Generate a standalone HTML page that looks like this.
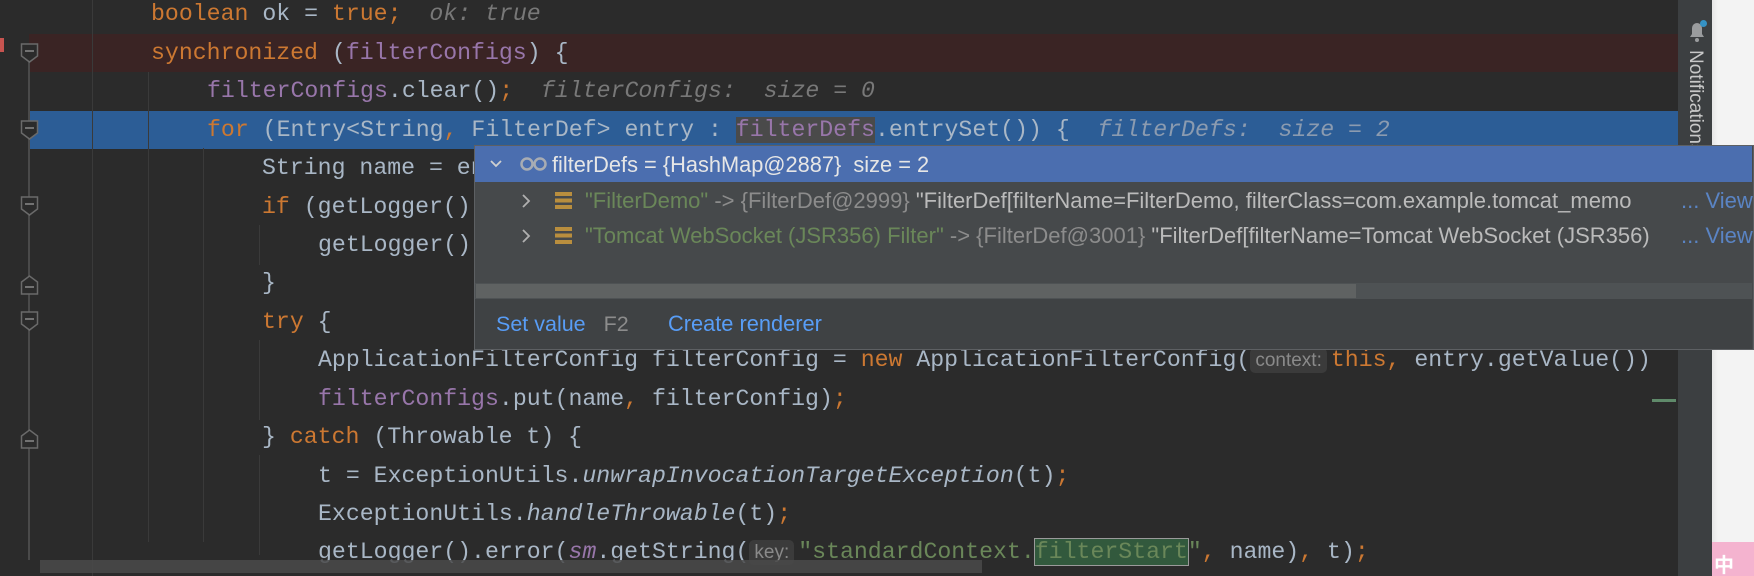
<!DOCTYPE html>
<html><head><meta charset="utf-8">
<style>
*{margin:0;padding:0;box-sizing:border-box}
body{width:1754px;height:576px;overflow:hidden;background:#2b2b2b;position:relative;font-family:"Liberation Mono",monospace}
.ln{position:absolute;left:0;height:38.43px;line-height:38.43px;font-size:23.2px;white-space:pre;color:#a9b7c6}
.k{color:#cc7832}.p{color:#9876aa}.s{color:#6a8759}.i{font-style:italic}
.h{font-style:italic;color:#787878}
.ph{font-family:"Liberation Sans",sans-serif;font-size:19px;color:#8a8a8a;background:#3b3b3b;border-radius:5px;padding:2px 5px;margin-right:4px}
.band{position:absolute;left:29px;width:1649px;height:38.43px}
.sans{font-family:"Liberation Sans",sans-serif}
.row{position:absolute;left:475px;width:1277px;height:35px;line-height:35px;font-size:22px;white-space:pre;font-family:"Liberation Sans",sans-serif}
</style></head><body>
<div class="band" style="top:33.7px;background:#3a2424"></div>
<div class="band" style="top:110.6px;background:#2c5d96"></div>
<div style="position:absolute;left:0;top:38px;width:4px;height:14px;background:#c75450"></div>
<div style="position:absolute;left:92px;top:0;width:1px;height:576px;background:#3a3a3a"></div>
<div style="position:absolute;left:28px;top:60px;width:2px;height:500px;background:#4a4a4a"></div>
<div style="position:absolute;left:148px;top:72px;width:1px;height:470px;background:#3a3a3a"></div>
<div style="position:absolute;left:203px;top:148px;width:1px;height:394px;background:#3a3a3a"></div>
<div style="position:absolute;left:259px;top:225px;width:1px;height:40px;background:#3a3a3a"></div>
<div style="position:absolute;left:259px;top:340px;width:1px;height:80px;background:#3a3a3a"></div>
<div style="position:absolute;left:259px;top:455px;width:1px;height:100px;background:#3a3a3a"></div>
<svg style="position:absolute;left:0;top:0" width="60" height="576">
<g fill="#2b2b2b" stroke="#6a6a6a" stroke-width="1.5">
<path d="M21.5 44h16v12l-8 6-8-6z"/><path d="M21.5 121h16v12l-8 6-8-6z"/>
<path d="M21.5 197h16v12l-8 6-8-6z"/><path d="M21.5 312h16v12l-8 6-8-6z"/>
<path d="M21.5 282l8-6 8 6v12h-16z"/><path d="M21.5 436l8-6 8 6v12h-16z"/>
</g>
<g stroke="#8a8a8a" stroke-width="1.5"><path d="M25 51h9M25 128h9M25 204h9M25 319h9M25 287h9M25 441h9"/></g>
</svg>
<div class="ln" style="top:-4.7px;left:151px"><span class="k">boolean</span> ok = <span class="k">true;</span>  <span class="h">ok: true</span></div>
<div class="ln" style="top:33.7px;left:151px"><span class="k">synchronized</span> (<span class="p">filterConfigs</span>) {</div>
<div class="ln" style="top:72.2px;left:207px"><span class="p">filterConfigs</span>.clear()<span class="k">;</span>  <span class="h">filterConfigs:  size = 0</span></div>
<div class="ln" style="top:110.6px;left:207px"><span class="k">for</span> (Entry&lt;String<span class="k">,</span> FilterDef&gt; entry : <span class="p" style="background:#4a4a4a">filterDefs</span>.entrySet()) {  <span class="h" style="color:#8b9bb0">filterDefs:  size = 2</span></div>
<div class="ln" style="top:149px;left:262px">String name = entry.getKey();</div>
<div class="ln" style="top:187.5px;left:262px"><span class="k">if</span> (getLogger().isDebugEnabled()) {</div>
<div class="ln" style="top:225.9px;left:318px">getLogger().debug(<span class="s">" Starting filter '"</span>);</div>
<div class="ln" style="top:264.3px;left:262px">}</div>
<div class="ln" style="top:302.7px;left:262px"><span class="k">try</span> {</div>
<div class="ln" style="top:341.2px;left:318px">ApplicationFilterConfig filterConfig = <span class="k">new</span> ApplicationFilterConfig(<span class="ph">context:</span><span class="k">this,</span> entry.getValue())</div>
<div class="ln" style="top:379.6px;left:318px"><span class="p">filterConfigs</span>.put(name<span class="k">,</span> filterConfig)<span class="k">;</span></div>
<div class="ln" style="top:418px;left:262px">} <span class="k">catch</span> (Throwable t) {</div>
<div class="ln" style="top:456.5px;left:318px">t = ExceptionUtils.<span class="i">unwrapInvocationTargetException</span>(t)<span class="k">;</span></div>
<div class="ln" style="top:494.9px;left:318px">ExceptionUtils.<span class="i">handleThrowable</span>(t)<span class="k">;</span></div>
<div class="ln" style="top:533.3px;left:318px">getLogger().error(<span class="p i">sm</span>.getString(<span class="ph">key:</span><span class="s">"standardContext.<span style="background:#32593d;outline:1.5px solid #9a9a9a">filterStart</span>"</span><span class="k">,</span> name)<span class="k">,</span> t)<span class="k">;</span></div>
<div style="position:absolute;left:1652px;top:399px;width:24px;height:3px;background:#5f8a6a"></div>
<div style="position:absolute;left:40px;top:560px;width:942px;height:13px;background:#4a4a4a;opacity:.85"></div>
<div style="position:absolute;left:1678px;top:0;width:34px;height:576px;background:#3c3f41"></div>
<div style="position:absolute;left:1712px;top:0;width:42px;height:576px;background:linear-gradient(90deg,#e6e6e6,#f3f3f3 6px,#f3f3f3)"></div>
<div style="position:absolute;left:1712px;top:542px;width:42px;height:34px;background:#f4b3cf;color:#fff;font:bold 20px 'Noto Sans CJK SC',sans-serif;line-height:44px;overflow:hidden;padding-left:2px">中</div>
<svg style="position:absolute;left:1684px;top:18px" width="26" height="26"><path d="M6 19h14l-2-3v-6a5 5 0 0 0-10 0v6z" fill="#9a9c9e"/><circle cx="13" cy="22" r="2" fill="#9a9c9e"/><circle cx="19.5" cy="5.5" r="3.5" fill="#3592c4"/></svg>
<div class="sans" style="position:absolute;left:1684px;top:50px;writing-mode:vertical-rl;font-size:19px;color:#c8c8c8;line-height:22px">Notifications</div>
<div style="position:absolute;left:474px;top:145px;width:1280px;height:205px;background:#46494b;border:1px solid #5d6063"></div>
<div style="position:absolute;left:475px;top:146px;width:1277px;height:36px;background:#4b6eaf"></div>
<div class="row" style="top:147px;color:#e6e6e6;font-size:21.8px"><svg style="position:absolute;left:14px;top:12px" width="14" height="10"><path d="M2 2l5 5 5-5" fill="none" stroke="#d0d0d0" stroke-width="1.8"/></svg><svg style="position:absolute;left:44px;top:9px" width="30" height="16"><circle cx="8" cy="8" r="5.5" fill="none" stroke="#a8acb3" stroke-width="2.5"/><circle cx="21" cy="8" r="5.5" fill="none" stroke="#a8acb3" stroke-width="2.5"/></svg><span style="position:absolute;left:77px">filterDefs = {HashMap@2887}  size = 2</span></div>
<div class="row" style="top:183px;color:#bbbbbb"><svg style="position:absolute;left:46px;top:10px" width="10" height="16"><path d="M2 2l6 6-6 6" fill="none" stroke="#b0b0b0" stroke-width="1.8"/></svg><svg style="position:absolute;left:80px;top:8px" width="18" height="20"><path d="M0 1h17v4H0zM0 7.5h17v4H0zM0 14h17v4H0z" fill="#b98e3e"/></svg><span style="position:absolute;left:110px;width:1096px;overflow:hidden"><span style="color:#6a8759">"FilterDemo"</span><span style="color:#8c8c8c"> -&gt; {FilterDef@2999}</span> "FilterDef[filterName=FilterDemo, filterClass=com.example.tomcat_memo</span><span style="position:absolute;left:1206px;color:#5a84c4">... View</span></div>
<div class="row" style="top:218px;color:#bbbbbb"><svg style="position:absolute;left:46px;top:10px" width="10" height="16"><path d="M2 2l6 6-6 6" fill="none" stroke="#b0b0b0" stroke-width="1.8"/></svg><svg style="position:absolute;left:80px;top:8px" width="18" height="20"><path d="M0 1h17v4H0zM0 7.5h17v4H0zM0 14h17v4H0z" fill="#b98e3e"/></svg><span style="position:absolute;left:110px;width:1096px;overflow:hidden"><span style="color:#6a8759">"Tomcat WebSocket (JSR356) Filter"</span><span style="color:#8c8c8c"> -&gt; {FilterDef@3001}</span> "FilterDef[filterName=Tomcat WebSocket (JSR356)</span><span style="position:absolute;left:1206px;color:#5a84c4">... View</span></div>
<div style="position:absolute;left:475px;top:283px;width:1277px;height:16px;background:#4e5254"></div>
<div style="position:absolute;left:476px;top:284px;width:880px;height:14px;background:#5f6262"></div>
<div style="position:absolute;left:475px;top:299px;width:1277px;height:50px;background:#3f4244"></div>
<div class="sans" style="position:absolute;left:496px;top:310px;font-size:21.5px;line-height:28px;color:#589df6;white-space:pre">Set value <span style="color:#8c8c8c">  F2</span></div>
<div class="sans" style="position:absolute;left:668px;top:310px;font-size:21.8px;line-height:28px;color:#589df6">Create renderer</div>
</body></html>
